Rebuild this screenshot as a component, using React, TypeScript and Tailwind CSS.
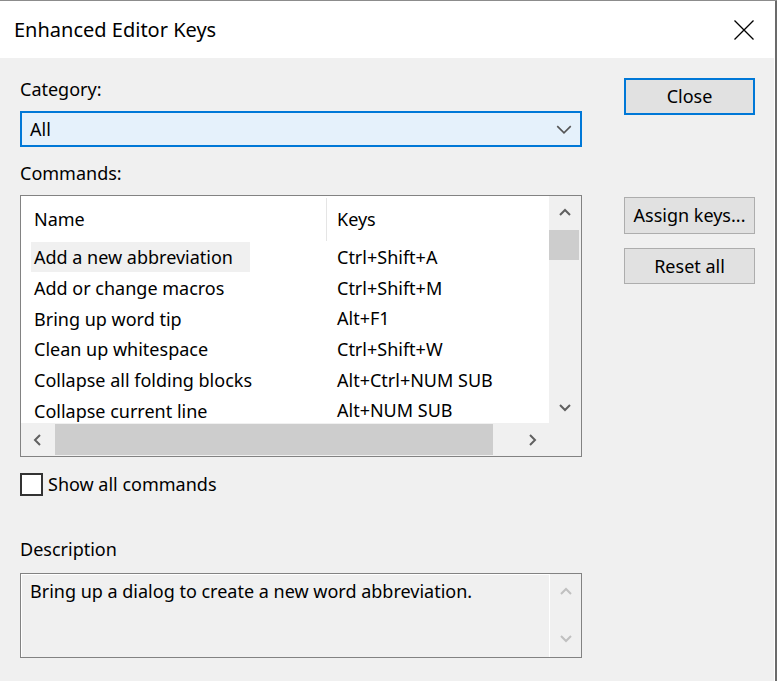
import React from 'react';

const commands = [
  { name: 'Add a new abbreviation', keys: 'Ctrl+Shift+A' },
  { name: 'Add or change macros', keys: 'Ctrl+Shift+M' },
  { name: 'Bring up word tip', keys: 'Alt+F1' },
  { name: 'Clean up whitespace', keys: 'Ctrl+Shift+W' },
  { name: 'Collapse all folding blocks', keys: 'Alt+Ctrl+NUM SUB' },
  { name: 'Collapse current line', keys: 'Alt+NUM SUB' },
];

function Chevron({ dir, className }: { dir: 'up' | 'down' | 'left' | 'right'; className?: string }) {
  const d = {
    up: 'M1 8 L6 3 L11 8',
    down: 'M1 3 L6 8 L11 3',
    left: 'M8 1 L3 6 L8 11',
    right: 'M3 1 L8 6 L3 11',
  }[dir];
  return (
    <svg viewBox="0 0 12 12" className={className} fill="none" stroke="currentColor" strokeWidth="2">
      <path d={d} />
    </svg>
  );
}

export default function App() {
  return (
    <div className="w-[777px] h-[681px] bg-[#f0f0f0] border-t border-[#8c8c8c] flex overflow-hidden text-black font-['Segoe_UI','Noto_Sans',sans-serif]">
      <div className="w-[774px] flex flex-col">
        {/* Title bar */}
        <div className="h-[57px] bg-white flex items-center justify-between pl-[14px] pr-[20px] shrink-0">
          <span className="text-[20px] leading-none">Enhanced Editor Keys</span>
          <svg viewBox="0 0 20 20" className="w-[20px] h-[20px]" fill="none" stroke="#000" strokeWidth="1.3">
            <path d="M0.5 0.5 L19.5 19.5 M19.5 0.5 L0.5 19.5" />
          </svg>
        </div>

        {/* Body */}
        <div className="flex pl-[20px] text-[18px]">
          {/* Left column */}
          <div className="w-[562px] flex flex-col">
            <div className="mt-[19px] h-[24px] leading-[24px]">Category:</div>
            <div className="mt-[10px] h-[36px] border-2 border-[#0078d7] bg-[#e5f1fb] flex items-center justify-between pl-[8px] pr-[8px]">
              <span>All</span>
              <svg viewBox="0 0 14 8" className="w-[16px] h-[9px]" fill="none" stroke="#555" strokeWidth="1.4">
                <path d="M1 1 L7 7 L13 1" />
              </svg>
            </div>
            <div className="mt-[14px] h-[24px] leading-[24px]">Commands:</div>

            {/* List */}
            <div className="mt-[10px] h-[262px] border border-[#828282] bg-white flex flex-col">
              <div className="flex h-[227px]">
                <div className="w-[528px] flex flex-col pl-[10px]">
                  <div className="h-[46px] flex shrink-0">
                    <div className="w-[295px] pl-[3px] pt-[10px]">Name</div>
                    <div className="w-px h-[43px] mt-[2px] bg-[#e5e5e5]" />
                    <div className="pl-[10px] pt-[10px]">Keys</div>
                  </div>
                  <div className="overflow-hidden">
                    {commands.map((c, i) => (
                      <div key={c.name} className="flex h-[30.7px] items-center">
                        <div className="w-[296px]">
                          <span
                            className={
                              'inline-block pl-[3px] leading-[30px] ' +
                              (i === 0 ? 'bg-[#f0f0f0] w-[219px]' : '')
                            }
                          >
                            {c.name}
                          </span>
                        </div>
                        <div className="pl-[10px]">{c.keys}</div>
                      </div>
                    ))}
                  </div>
                </div>
                {/* Vertical scrollbar */}
                <div className="flex-1 bg-[#f0f0f0] flex flex-col items-stretch">
                  <div className="h-[34px] flex items-center justify-center text-[#606060]">
                    <Chevron dir="up" className="w-[12px] h-[12px]" />
                  </div>
                  <div className="h-[30px] bg-[#cdcdcd] mr-[2px]" />
                  <div className="flex-1" />
                  <div className="h-[30px] flex items-center justify-center text-[#606060]">
                    <Chevron dir="down" className="w-[12px] h-[12px]" />
                  </div>
                </div>
              </div>
              {/* Horizontal scrollbar */}
              <div className="flex-1 bg-[#f0f0f0] flex items-stretch">
                <div className="w-[34px] flex items-center justify-center text-[#606060]">
                  <Chevron dir="left" className="w-[12px] h-[12px]" />
                </div>
                <div className="w-[438px] bg-[#cdcdcd] my-[1px]" />
                <div className="w-[56px] flex items-center justify-end pr-[10px] text-[#606060]">
                  <Chevron dir="right" className="w-[12px] h-[12px]" />
                </div>
              </div>
            </div>

            <label className="mt-[16px] h-[23px] flex items-center gap-[5px]">
              <span className="w-[23px] h-[23px] border-2 border-[#333] bg-white shrink-0" />
              <span>Show all commands</span>
            </label>

            <div className="mt-[41px] h-[24px] leading-[24px]">Description</div>
            <div className="mt-[12px] h-[85px] border border-[#828282] flex">
              <div className="flex-1 border-l border-t border-white pl-[8px] pt-[4px] leading-[24px]">
                Bring up a dialog to create a new word abbreviation.
              </div>
              <div className="w-[32px] border-l border-white flex flex-col justify-between py-[12px] items-center text-[#c0c0c0]">
                <Chevron dir="up" className="w-[12px] h-[12px]" />
                <Chevron dir="down" className="w-[12px] h-[12px]" />
              </div>
            </div>
          </div>

          {/* Right column */}
          <div className="ml-[42px] w-[131px] flex flex-col">
            <button className="mt-[20px] h-[37px] border-2 border-[#0078d7] bg-[#e1e1e1] text-[18px]">Close</button>
            <button className="mt-[82px] h-[37px] border border-[#adadad] bg-[#e1e1e1] text-[18px]">Assign keys...</button>
            <button className="mt-[14px] h-[36px] border border-[#adadad] bg-[#e1e1e1] text-[18px]">Reset all</button>
          </div>
        </div>
      </div>
      <div className="w-px bg-white" />
      <div className="w-[2px] bg-[#6b6b6b]" />
    </div>
  );
}
